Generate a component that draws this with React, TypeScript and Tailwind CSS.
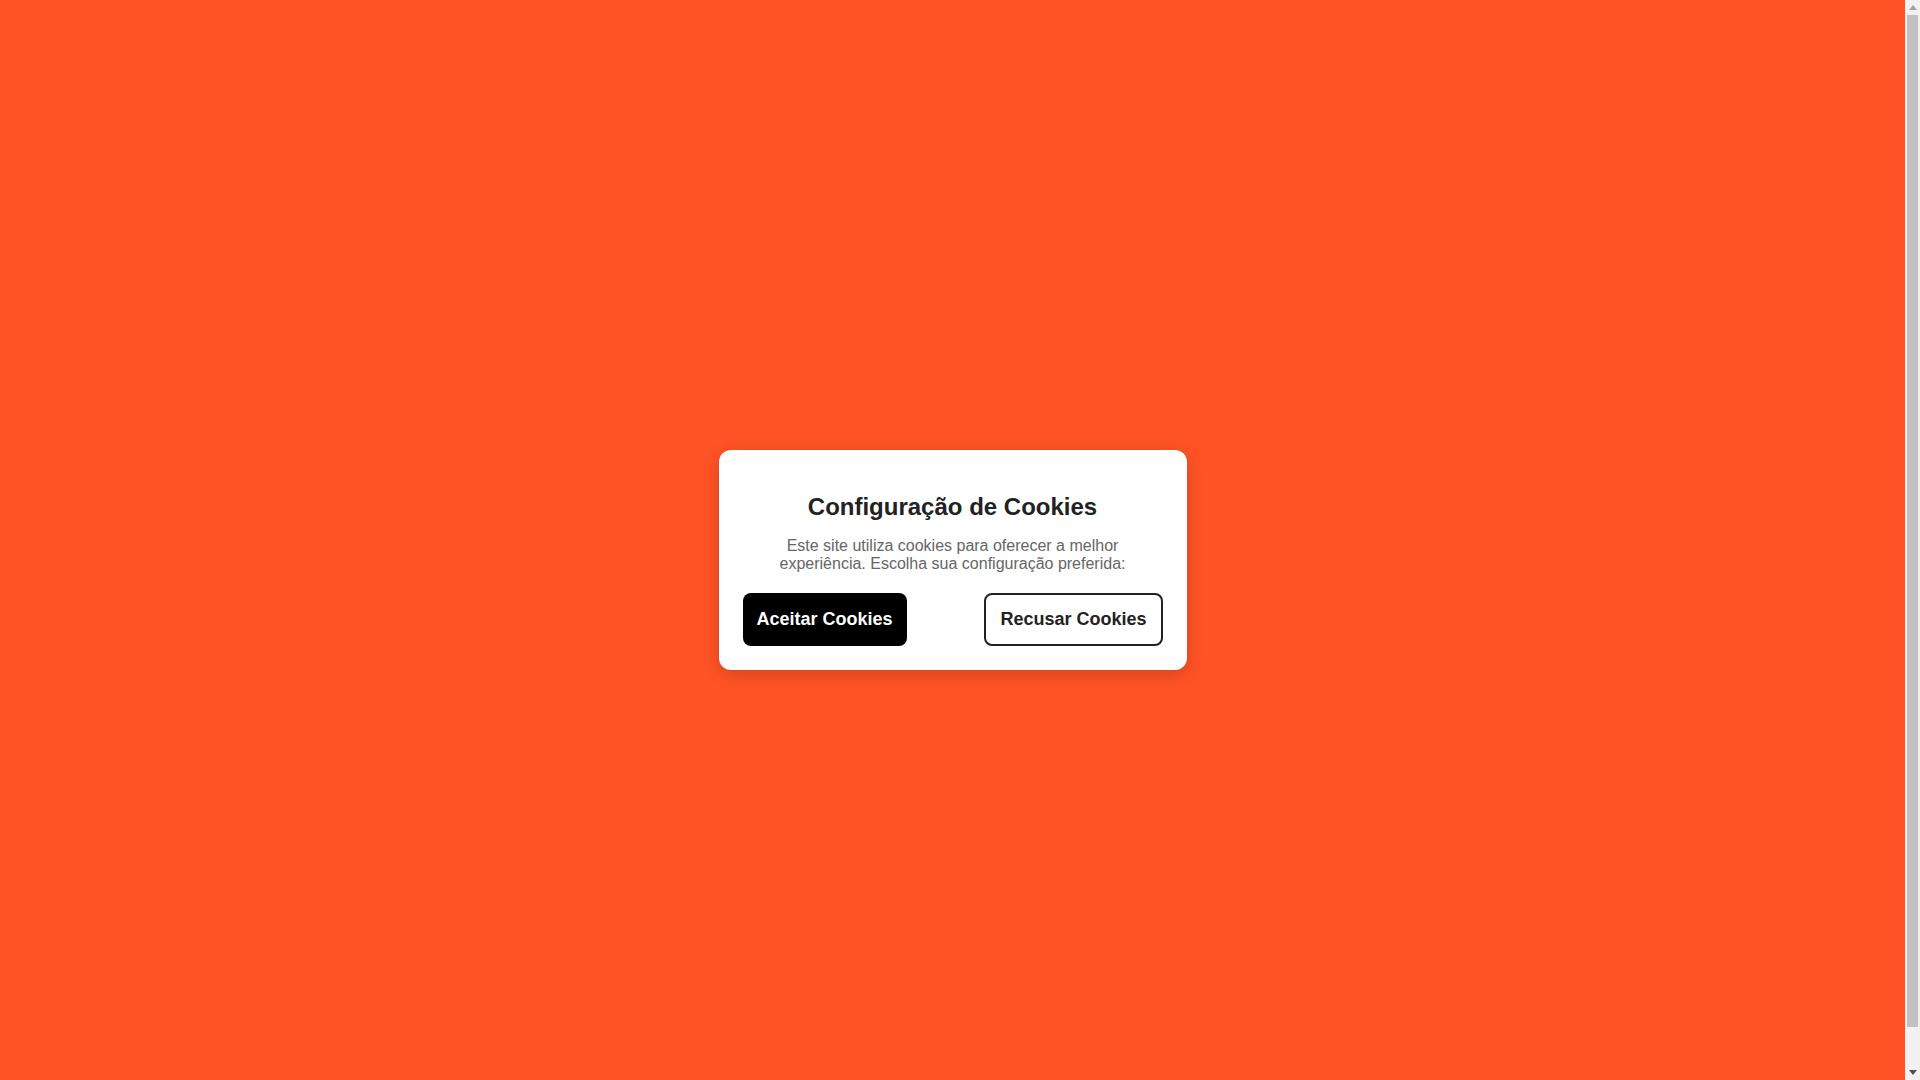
import React from "react";

const CookieModal: React.FC = () => {
  return (
    <div className="w-[468px] rounded-xl bg-white p-6 text-center shadow-[0_4px_16px_rgba(0,0,0,0.18)]">
      <h2 className="mt-[19px] mb-[16px] text-[24px] font-bold leading-[normal] text-[#222]">
        Configuração de Cookies
      </h2>
      <p className="mx-auto mb-[20px] max-w-[380px] text-[16px] leading-[18px] text-[#666]">
        Este site utiliza cookies para oferecer a melhor experiência. Escolha sua configuração preferida:
      </p>
      <div className="flex justify-between">
        <button className="rounded-lg bg-black p-[14px] text-[18px] font-bold leading-[normal] text-white">
          Aceitar Cookies
        </button>
        <button className="rounded-lg border-2 border-[#222] bg-white p-[14px] text-[18px] font-bold leading-[normal] text-[#222]">
          Recusar Cookies
        </button>
      </div>
    </div>
  );
};

const Scrollbar: React.FC = () => (
  <div className="flex h-full w-[15px] flex-col bg-[#f1f1f1]">
    <div className="flex h-[15px] items-center justify-center">
      <svg width="8" height="5" viewBox="0 0 8 5">
        <path d="M4 0 L8 5 L0 5 Z" fill="#a3a3a3" />
      </svg>
    </div>
    <div className="mx-[2px] h-[1012px] bg-[#c1c1c1]" />
    <div className="flex-1" />
    <div className="flex h-[15px] items-center justify-center">
      <svg width="8" height="5" viewBox="0 0 8 5">
        <path d="M0 0 L8 0 L4 5 Z" fill="#505050" />
      </svg>
    </div>
  </div>
);

export default function App() {
  return (
    <div
      className="flex h-screen overflow-hidden bg-[#ff5325]"
      style={{ fontFamily: '"Liberation Sans", Arial, sans-serif' }}
    >
      <main className="flex flex-1 items-center justify-center pt-[40px]">
        <CookieModal />
      </main>
      <Scrollbar />
    </div>
  );
}
